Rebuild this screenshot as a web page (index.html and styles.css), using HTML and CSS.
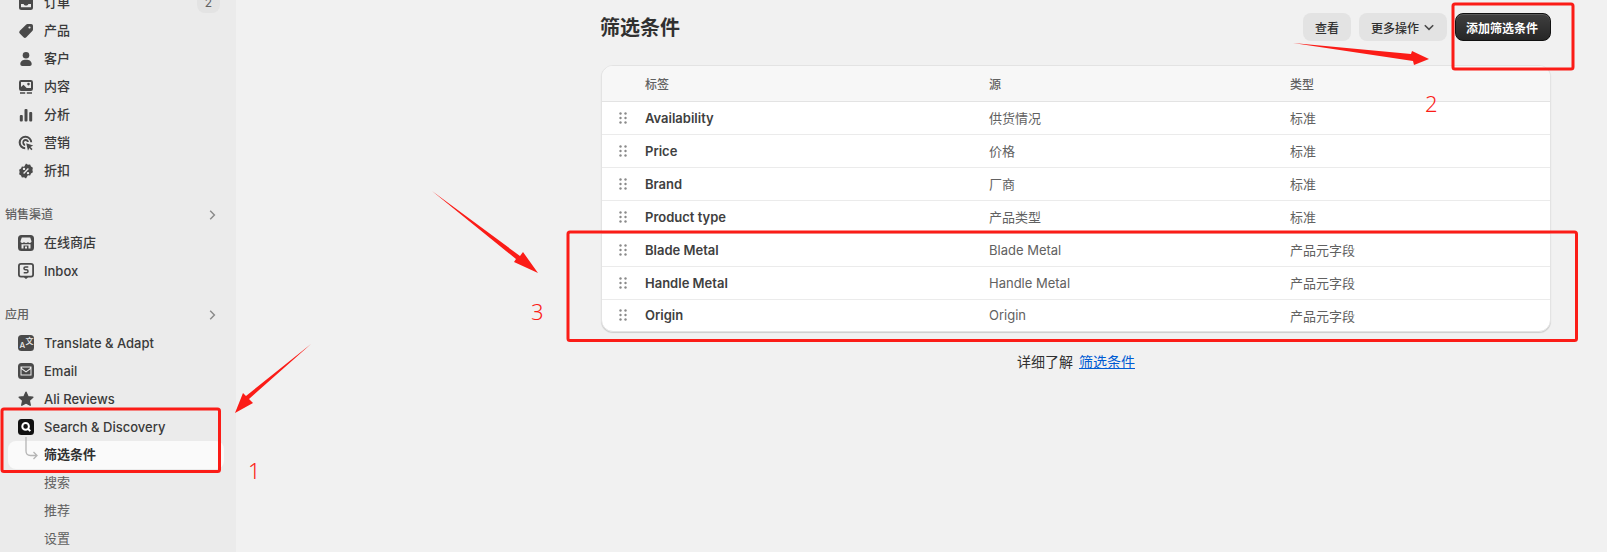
FILE: index.html
```html
<!DOCTYPE html>
<html lang="zh-CN">
<head>
  <meta charset="UTF-8">
  <title>筛选条件</title>
  <link rel="stylesheet" href="styles.css">
</head>
<body>

<div class="page">
  <!-- Sidebar -->
  <nav class="sidebar">
    <a class="nav-item">
      <svg class="icon" viewBox="0 0 16 16"><path d="M3.500 1h9A2.500 2.500 0 0 1 15 3.500v9a2.500 2.500 0 0 1-2.500 2.500h-9A2.500 2.500 0 0 1 1 12.500v-9A2.500 2.500 0 0 1 3.500 1zM3 9v3.200h10V9h-2.600c-.5 1-1.300 1.500-2.400 1.500S6.100 10 5.600 9z"/></svg>
      <span class="cjk">订单</span><span class="badge">2</span>
    </a>
    <a class="nav-item">
      <svg class="icon" viewBox="0 0 16 16"><path d="M9.500 1h3.700A1.800 1.800 0 0 1 15 2.800v3.700c0 .6-.2 1.100-.7 1.500l-6 6.200a2 2 0 0 1-2.800 0l-3.700-3.700a2 2 0 0 1 0-2.800l6.200-6c.4-.5.9-.7 1.500-.7zM11.500 3.400a1.100 1.100 0 1 0 0 2.200 1.100 1.100 0 0 0 0-2.200z" fill-rule="evenodd"/></svg>
      <span class="cjk">产品</span>
    </a>
    <a class="nav-item">
      <svg class="icon" viewBox="0 0 16 16"><circle cx="8" cy="4.300" r="3.300"/><path d="M2.300 13c0-2.800 2.400-4.300 5.700-4.300s5.700 1.500 5.700 4.300c0 1.200-.8 2-2 2H4.300c-1.200 0-2-.8-2-2z"/></svg>
      <span class="cjk">客户</span>
    </a>
    <a class="nav-item">
      <svg class="icon" viewBox="0 0 16 16"><path fill-rule="evenodd" d="M3.200 1h9.600A2.200 2.200 0 0 1 15 3.200v6.600a2.200 2.200 0 0 1-2.200 2.200H3.200A2.200 2.200 0 0 1 1 9.800V3.200A2.200 2.200 0 0 1 3.200 1zM3 3v5l2.500-2.200 3.200 3.200H13V3zM10.500 3.800a1.300 1.300 0 1 0 0 2.600 1.300 1.300 0 0 0 0-2.600z"/><path d="M2 13.300h5.200v1.500H2zM8.800 13.300H14v1.500H8.800z"/></svg>
      <span class="cjk">内容</span>
    </a>
    <a class="nav-item">
      <svg class="icon" viewBox="0 0 16 16"><rect x="1.800" y="8" width="3" height="6.500" rx="1"/><rect x="6.500" y="2" width="3" height="12.500" rx="1"/><rect x="11.200" y="5" width="3" height="9.500" rx="1"/></svg>
      <span class="cjk">分析</span>
    </a>
    <a class="nav-item">
      <svg class="icon" viewBox="0 0 16 16"><path d="M7.500.8a6.700 6.700 0 0 1 6.700 6.400h-1.900a4.800 4.800 0 1 0-5.100 5.100v1.900A6.700 6.700 0 0 1 7.500.8z"/><path d="M7.500 4a3.500 3.500 0 0 1 3.400 3h-2a1.500 1.500 0 1 0-1.800 1.900v2A3.500 3.500 0 0 1 7.500 4z"/><path d="M8.200 8.200l7 2.400-2.800 1.300 2.100 2.200-1.100 1.100-2.100-2.200-1.300 2.700z"/></svg>
      <span class="cjk">营销</span>
    </a>
    <a class="nav-item">
      <svg class="icon icon-lg" viewBox="0 0 16 16"><path fill-rule="evenodd" d="M8 .5l1.900 1.200 2.200-.1.900 2 1.900 1.200-.5 2.200.5 2.200-1.900 1.200-.9 2-2.200-.1L8 15.500l-1.900-1.200-2.200.1-.9-2-1.900-1.200.5-2.200L1.100 6.800 3 5.600l.9-2 2.200.1zM9.900 5l-4.800 4.900 1 1 4.800-4.900zM6 4.700a1.200 1.200 0 1 0 0 2.400 1.200 1.200 0 0 0 0-2.400zM10 8.900a1.200 1.200 0 1 0 0 2.400 1.200 1.200 0 0 0 0-2.400z"/></svg>
      <span class="cjk">折扣</span>
    </a>

    <div class="nav-heading">
      <span class="cjk-head">销售渠道</span>
      <svg class="chevron" viewBox="0 0 10 10"><path d="M3.500 1.500L7 5 3.500 8.500"/></svg>
    </div>
    <a class="nav-item nav-strong">
      <svg class="icon" viewBox="0 0 16 16"><path fill-rule="evenodd" d="M3.500 0h9A3.500 3.500 0 0 1 16 3.500v9a3.500 3.500 0 0 1-3.500 3.500h-9A3.500 3.500 0 0 1 0 12.500v-9A3.500 3.500 0 0 1 3.500 0zM3.800 2.500L2.500 6.200c0 1 .8 1.700 1.800 1.700.7 0 1.300-.3 1.700-.9.400.6 1.100.9 2 .9s1.600-.3 2-.9c.4.600 1 .9 1.700.9 1 0 1.800-.7 1.800-1.700l-1.300-3.700zM3.500 9.300V13.500h2V10.500h5v3h2V9.300zM7 11.500h2v2H7z"/></svg>
      <span class="cjk">在线商店</span>
    </a>
    <a class="nav-item">
      <svg class="icon" viewBox="0 0 16 16"><path fill-rule="evenodd" d="M3 0h10a3 3 0 0 1 3 3v8.500a3 3 0 0 1-3 3h-3L8 16l-2-1.500H3a3 3 0 0 1-3-3V3a3 3 0 0 1 3-3zM3 1.800A1.200 1.200 0 0 0 1.800 3v8.500A1.200 1.200 0 0 0 3 12.700h10a1.200 1.200 0 0 0 1.200-1.200V3A1.200 1.200 0 0 0 13 1.800z"/><path class="icon-s" d="M10.300 3.900H7.400c-1.900 0-1.900 2.900 0 2.900h1.200c1.900 0 1.900 2.900 0 2.900H5.700"/></svg>
      <span>Inbox</span>
    </a>

    <div class="nav-heading">
      <span class="cjk-head">应用</span>
      <svg class="chevron" viewBox="0 0 10 10"><path d="M3.500 1.500L7 5 3.500 8.500"/></svg>
    </div>
    <a class="nav-item">
      <svg class="icon" viewBox="0 0 16 16"><rect width="16" height="16" rx="3.500"/><text class="icon-text" x="1.500" y="13">A</text><text class="icon-text" x="7.500" y="8.500">文</text></svg>
      <span>Translate &amp; Adapt</span>
    </a>
    <a class="nav-item">
      <svg class="icon" viewBox="0 0 16 16"><path fill-rule="evenodd" d="M3.500 0h9A3.500 3.500 0 0 1 16 3.500v9a3.500 3.500 0 0 1-3.500 3.500h-9A3.500 3.500 0 0 1 0 12.500v-9A3.500 3.500 0 0 1 3.500 0zM2.500 3.500v9h11v-9zM4 5.200l4 3 4-3v-.7H4zM3.500 6.300v5.200h9V6.300L8 9.600z"/></svg>
      <span>Email</span>
    </a>
    <a class="nav-item">
      <svg class="icon icon-star" viewBox="0 0 16 16"><path fill-rule="evenodd" d="M8 1.300l2 4.500 4.800.5-3.600 3.200 1 4.700L8 11.900l-4.200 2.300 1-4.700L1.200 6.300 6 5.800zM8.200 6L6.800 10h1l.3-1h.5l.3 1h.8z"/></svg>
      <span>Ali Reviews</span>
    </a>
    <a class="nav-item">
      <svg class="icon" viewBox="0 0 16 16"><rect width="16" height="16" rx="3.500" fill="#111"/><circle class="icon-lens" cx="7.600" cy="7.400" r="3.300"/><path class="icon-lens" d="M10 9.800l2.300 2.300"/></svg>
      <span>Search &amp; Discovery</span>
    </a>
    <a class="nav-item nav-sub nav-active">
      <svg class="nav-branch" viewBox="0 0 20 28"><path d="M2 0v14c0 3 1.500 4.500 4.500 4.500h6.500M9.500 15l3.500 3.500-3.500 3.500"/></svg>
      <span class="cjk">筛选条件</span>
    </a>
    <a class="nav-item nav-sub">
      <span class="cjk">搜索</span>
    </a>
    <a class="nav-item nav-sub">
      <span class="cjk">推荐</span>
    </a>
    <a class="nav-item nav-sub">
      <span class="cjk">设置</span>
    </a>
  </nav>

  <!-- Main content -->
  <main class="content">
    <div class="page-header">
      <h1>筛选条件</h1>
      <div class="actions">
        <button class="btn">查看</button>
        <button class="btn btn-menu">更多操作
          <svg class="btn-chevron" viewBox="0 0 10 10"><path d="M1.500 3.500L5 7l3.500-3.500"/></svg>
        </button>
        <button class="btn btn-primary">添加筛选条件</button>
      </div>
    </div>

    <div class="card">
      <table class="filters">
        <thead>
          <tr>
            <th class="col-handle"></th>
            <th class="col-label">标签</th>
            <th class="col-source">源</th>
            <th>类型</th>
          </tr>
        </thead>
        <tbody id="filter-rows"></tbody>
      </table>
    </div>

    <p class="learn-more">详细了解 <a href="#">筛选条件</a></p>
  </main>

  <!-- Red annotations drawn on top of the screenshot -->
  <svg class="marks" viewBox="0 0 1607 552">
    <rect x="2" y="409" width="217.500" height="62.500" rx="2"/>
    <rect x="1453" y="4" width="120" height="65" rx="2"/>
    <rect x="568" y="232" width="1008.500" height="108.500" rx="2"/>
    <path class="mark-arrow" d="M311 344L249 399 253 403 235 413 243 393 246 396z"/>
    <path class="mark-arrow" d="M1293 43L1411 54 1412 51 1429 59 1414 65 1413 61z"/>
    <path class="mark-arrow" d="M432 191L520 256 523 252 538 273 514 262 516 259z"/>
  </svg>
  <span class="mark-num mark-num-1">1</span>
  <span class="mark-num mark-num-2">2</span>
  <span class="mark-num mark-num-3">3</span>
</div>

<script>
  const filters = [
    ['Availability', '供货情况', '标准'],
    ['Price', '价格', '标准'],
    ['Brand', '厂商', '标准'],
    ['Product type', '产品类型', '标准'],
    ['Blade Metal', 'Blade Metal', '产品元字段'],
    ['Handle Metal', 'Handle Metal', '产品元字段'],
    ['Origin', 'Origin', '产品元字段'],
  ];

  const handle = '<svg class="handle" viewBox="0 0 8 12"><circle cx="1.500" cy="1.500" r="1.200"/><circle cx="6.500" cy="1.500" r="1.200"/><circle cx="1.500" cy="6" r="1.200"/><circle cx="6.500" cy="6" r="1.200"/><circle cx="1.500" cy="10.500" r="1.200"/><circle cx="6.500" cy="10.500" r="1.200"/></svg>';

  // Fill the table rows
  document.getElementById('filter-rows').innerHTML = filters.map(f =>
    `<tr><td class="cell-handle">${handle}</td><td class="cell-label">${f[0]}</td><td>${f[1]}</td><td>${f[2]}</td></tr>`
  ).join('');
</script>

</body>
</html>
```

FILE: styles.css
```css
/* Reset */
* {
  margin: 0;
  padding: 0;
  box-sizing: border-box;
}

body {
  font-family: Inter, 'Noto Sans CJK SC', sans-serif;
  font-size: 13px;
  color: #303030;
  background-color: #f1f1f1;
  overflow: hidden;
}

.page {
  position: relative;
  display: flex;
  width: 1607px;
  height: 552px;
  overflow: hidden;
}

/* Sidebar */
.sidebar {
  flex: 0 0 236px;
  margin-top: -11px;
  height: 600px;
  background-color: #ebebeb;
}

.nav-item {
  position: relative;
  display: flex;
  align-items: center;
  height: 28px;
  padding-left: 18px;
  font-weight: 500;
  color: #3a3a3a;
}

.nav-item > span:first-of-type {
  margin-left: 10px;
}

/* Chinese glyphs sit low in the line, lift them a little */
.cjk {
  padding-bottom: 4px;
}

.cjk-head {
  padding-bottom: 3px;
}

.icon {
  flex: 0 0 16px;
  width: 16px;
  height: 16px;
  fill: #4a4a4a;
}

.icon-star {
  stroke: #4a4a4a;
  stroke-width: 1.500;
  stroke-linejoin: round;
}

.icon-text {
  font-size: 8px;
  fill: #ebebeb;
}

.icon-lens {
  fill: none;
  stroke: #fff;
  stroke-width: 2;
}

.icon-s {
  fill: none;
  stroke: #4a4a4a;
  stroke-width: 1.500;
}

.badge {
  position: absolute;
  left: 197px;
  top: 0;
  width: 23px;
  height: 24px;
  line-height: 27px;
  text-align: center;
  border-radius: 8px;
  background-color: #e3e3e3;
  color: #616161;
  font-size: 12px;
  font-weight: 400;
}

.nav-heading {
  display: flex;
  align-items: center;
  justify-content: space-between;
  height: 28px;
  margin-top: 16px;
  padding: 0 18px 0 5px;
  font-size: 12px;
  font-weight: 500;
  color: #616161;
}

.chevron {
  width: 12px;
  height: 12px;
  fill: none;
  stroke: #8a8a8a;
  stroke-width: 1.200;
}

.nav-sub {
  padding-left: 34px;
  font-weight: 400;
  color: #616161;
}

.nav-active {
  margin: 0 12px 0 8px;
  padding-left: 26px;
  border-radius: 8px;
  background-color: #fafafa;
  font-weight: 600;
  color: #303030;
}

.nav-branch {
  position: absolute;
  left: 16px;
  top: -4px;
  width: 20px;
  height: 28px;
  fill: none;
  stroke: #b5b5b5;
  stroke-width: 1.300;
  overflow: visible;
}

.nav-strong {
  font-weight: 500;
}

/* Main content */
.content {
  flex: 0 0 950px;
  margin-left: 365px;
  padding-top: 13px;
}

.page-header {
  display: flex;
  align-items: center;
  justify-content: space-between;
  height: 28px;
  margin-bottom: 24px;
}

h1 {
  margin-left: -1px;
  padding-bottom: 2px;
  font-size: 20px;
  font-weight: 700;
  color: #303030;
}

.actions {
  display: flex;
  gap: 8px;
}

.btn {
  display: flex;
  align-items: center;
  gap: 6px;
  height: 28px;
  padding: 0 12px;
  border: none;
  border-radius: 8px;
  background-color: #e3e3e3;
  font-family: inherit;
  font-size: 12px;
  font-weight: 500;
  color: #303030;
}

.btn-menu {
  gap: 4px;
}

.btn-chevron {
  width: 12px;
  height: 12px;
  fill: none;
  stroke: #4a4a4a;
  stroke-width: 1.300;
}

.btn-primary {
  padding: 0 12px 0 10px;
  background: linear-gradient(#3f3f3f, #262626);
  border: 1px solid #111;
  box-shadow: inset 0 1px 0 #5a5a5a;
  color: #fff;
  font-weight: 700;
}

/* Table card */
.card {
  width: 950px;
  border: 1px solid #e3e3e3;
  border-radius: 12px;
  background-color: #fff;
  box-shadow: 0 1px 1px rgba(0, 0, 0, 0.15);
  overflow: hidden;
}

.filters {
  width: 100%;
  border-collapse: collapse;
  table-layout: fixed;
}

th {
  height: 35px;
  background-color: #f7f7f7;
  border-bottom: 1px solid #e3e3e3;
  font-size: 12px;
  font-weight: 500;
  color: #616161;
  text-align: left;
}

td {
  height: 33px;
  border-bottom: 1px solid #ebebeb;
  color: #616161;
}

tbody tr:last-child td {
  height: 32px;
  border-bottom: none;
}

.col-handle {
  width: 43px;
}

.col-label {
  width: 344px;
}

.col-source {
  width: 301px;
}

.cell-handle {
  padding-left: 17px;
}

.cell-label {
  font-weight: 600;
  color: #404040;
}

.handle {
  display: block;
  width: 8px;
  height: 12px;
  fill: #8a8a8a;
}

.learn-more {
  margin-top: 19px;
  font-size: 14px;
  text-align: center;
}

.learn-more a {
  margin-left: 2px;
  color: #005bd3;
}

/* Annotations */
.marks {
  position: absolute;
  left: 0;
  top: 0;
  width: 1607px;
  height: 552px;
  fill: none;
  stroke: #fb1c17;
  stroke-width: 3;
  pointer-events: none;
}

.mark-arrow {
  fill: #fb1c17;
  stroke: none;
}

.mark-num {
  position: absolute;
  font-family: 'Noto Sans', sans-serif;
  font-size: 22px;
  font-weight: 300;
  line-height: 26px;
  color: #fb1c17;
}

.mark-num-1 {
  left: 248px;
  top: 457px;
}

.mark-num-2 {
  left: 1425px;
  top: 90px;
}

.mark-num-3 {
  left: 531px;
  top: 298px;
}
```
